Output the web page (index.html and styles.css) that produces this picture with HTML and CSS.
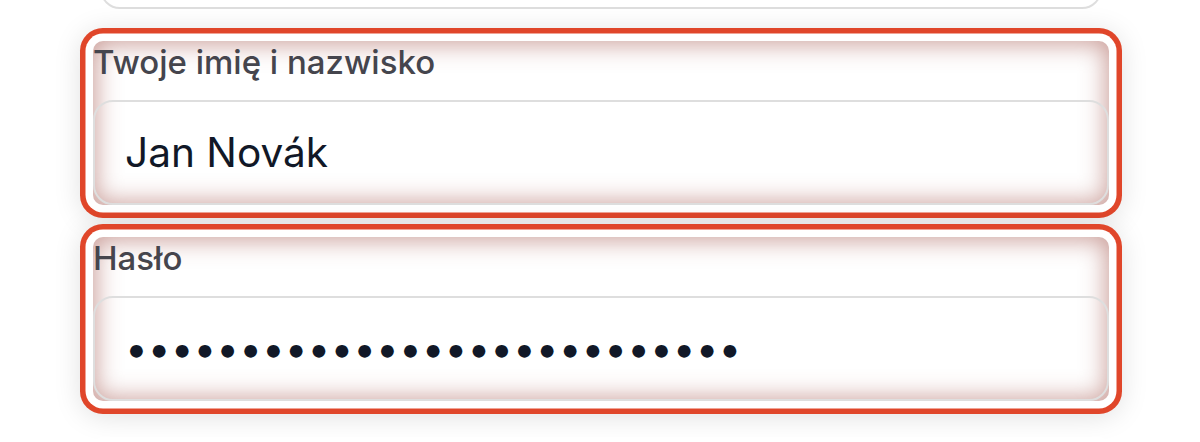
FILE: index.html
```html
<!DOCTYPE html>
<html lang="pl">
<head>
<meta charset="utf-8">
<title>Formularz</title>
<link rel="stylesheet" href="styles.css">
</head>
<body>
<form class="form">
  <div class="field prev">
    <label class="label" for="email">Adres e-mail</label>
    <input class="input" id="email" type="text" value="">
  </div>
  <div class="field focused">
    <label class="label" for="name">Twoje imię i nazwisko</label>
    <input class="input" id="name" type="text" value="Jan Novák">
  </div>
  <div class="field focused">
    <label class="label" for="pass">Hasło</label>
    <input class="input" id="pass" type="password" value="abcdefghijklmnopqrstuvwxyza">
  </div>
  <div class="field next">
    <label class="label" for="pass2">Powtórz hasło</label>
    <input class="input" id="pass2" type="password" value="">
  </div>
</form>
</body>
</html>
```
FILE: styles.css
```css
html, body {
  margin: 0;
  padding: 0;
  background: #ffffff;
  overflow: hidden;
}

body {
  font-family: Inter, "Liberation Sans", sans-serif;
}

.form {
  width: 1016px;
  margin: -155px 0 0 93px;
  display: flex;
  flex-direction: column;
  gap: 32px;
}

.field {
  display: flex;
  flex-direction: column;
  border-radius: 10px;
  background: #ffffff;
}

.label {
  display: block;
  font-size: 33px;
  line-height: 42px;
  font-weight: 500;
  color: #45454d;
  margin-bottom: 17px;
}

.input {
  box-sizing: border-box;
  width: 100%;
  height: 105px;
  margin: 0;
  padding: 0 30px;
  border: 2px solid #dedede;
  border-radius: 20px;
  background: transparent;
  font-family: Inter, "Liberation Sans", sans-serif;
  font-size: 40.6px;
  color: #111827;
  outline: none;
}

.prev .input {
  width: auto;
  margin: 0 7px;
  background: #ffffff;
}

.next {
  margin-top: 4px;
}

.focused {
  box-shadow:
    inset 0 0 24px 3px rgba(150, 60, 50, 0.5),
    0 0 0 7.5px #ffffff,
    0 0 0 13px #e0462a,
    0 3px 28px 12px rgba(0, 0, 0, 0.13);
}
```
